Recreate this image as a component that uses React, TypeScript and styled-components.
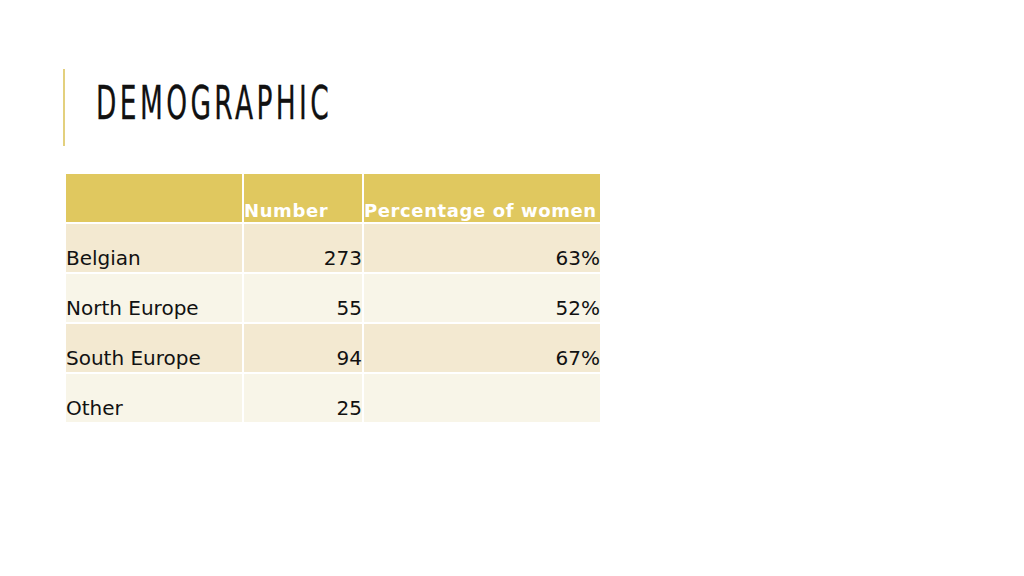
import React from 'react'
import styled, { createGlobalStyle } from 'styled-components'

const GlobalStyle = createGlobalStyle`
  html, body {
    margin: 0;
    padding: 0;
    background: #ffffff;
  }
  body {
    width: 1024px;
    height: 576px;
    overflow: hidden;
  }
`

const Slide = styled.div`
  width: 1024px;
  height: 576px;
  background: #ffffff;
  padding: 69px 0 0 63px;
  box-sizing: border-box;
`

const TitleBlock = styled.div`
  display: flex;
  align-items: center;
  height: 77px;
  border-left: 2px solid #e3d07e;
  padding-left: 31px;
  padding-bottom: 10px;
  box-sizing: border-box;
`

const Title = styled.h1`
  margin: 0;
  font-family: 'DejaVu Sans Condensed', 'DejaVu Sans', sans-serif;
  font-weight: normal;
  font-size: 46px;
  letter-spacing: 5.3px;
  color: #111111;
  transform: scaleX(0.64);
  transform-origin: left center;
  white-space: nowrap;
  -webkit-text-stroke: 0.3px #111111;
`

const Table = styled.div`
  margin: 28px 0 0 3px;
  display: grid;
  grid-template-columns: 176px 118px 236px;
  column-gap: 2px;
  row-gap: 2px;
  width: 534px;
`

const Cell = styled.div<{ $bg: string; $align?: 'left' | 'right'; $head?: boolean }>`
  height: 48px;
  background: ${p => p.$bg};
  display: flex;
  align-items: flex-end;
  justify-content: ${p => (p.$align === 'right' ? 'flex-end' : 'flex-start')};
  font-family: 'DejaVu Sans', sans-serif;
  font-size: ${p => (p.$head ? '18px' : '20px')};
  letter-spacing: ${p => (p.$head ? '0.6px' : '0')};
  font-weight: ${p => (p.$head ? 700 : 400)};
  color: ${p => (p.$head ? '#ffffff' : '#111111')};
  padding-bottom: ${p => (p.$head ? '2px' : '4px')};
  box-sizing: border-box;
  white-space: nowrap;
  line-height: 1;
`

const HEAD = '#e0c85f'
const DARK = '#f3e9d1'
const LIGHT = '#f8f5e8'

const rows = [
  { name: 'Belgian', num: '273', pct: '63%' },
  { name: 'North Europe', num: '55', pct: '52%' },
  { name: 'South Europe', num: '94', pct: '67%' },
  { name: 'Other', num: '25', pct: '' },
]

export default function App() {
  return (
    <>
      <GlobalStyle />
      <Slide>
        <TitleBlock>
          <Title>DEMOGRAPHIC</Title>
        </TitleBlock>
        <Table>
          <Cell $bg={HEAD} $head />
          <Cell $bg={HEAD} $head>Number</Cell>
          <Cell $bg={HEAD} $head>Percentage of women</Cell>
          {rows.map((r, i) => {
            const bg = i % 2 === 0 ? DARK : LIGHT
            return (
              <React.Fragment key={r.name}>
                <Cell $bg={bg}>{r.name}</Cell>
                <Cell $bg={bg} $align="right">{r.num}</Cell>
                <Cell $bg={bg} $align="right">{r.pct}</Cell>
              </React.Fragment>
            )
          })}
        </Table>
      </Slide>
    </>
  )
}
